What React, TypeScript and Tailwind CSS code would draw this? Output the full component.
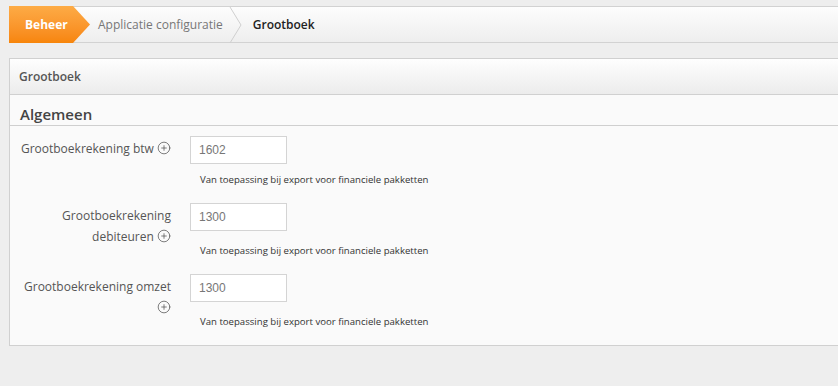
import { CirclePlus } from 'lucide-react'

const fields = [
  { id: 'btw', label: ['Grootboekrekening btw'], value: '1602', tall: false },
  { id: 'deb', label: ['Grootboekrekening', 'debiteuren'], value: '1300', tall: true },
  { id: 'omzet', label: ['Grootboekrekening omzet', ''], value: '1300', tall: true },
]

function Chevron() {
  return (
    <svg width="14" height="36" viewBox="0 0 14 36" className="shrink-0">
      <polyline points="1,0 12,18 1,36" fill="none" stroke="#cfcfcf" strokeWidth="1" />
    </svg>
  )
}

function Plus() {
  return <CirclePlus size={14} strokeWidth={1.3} className="inline-block text-[#555] align-[-2px]" />
}

export default function App() {
  return (
    <div
      className="min-h-[386px] w-[838px] overflow-hidden bg-[#eeeeee] pl-[9px] pt-[6px]"
      style={{ fontFamily: '"Open Sans", "Noto Sans", sans-serif' }}
    >
      {/* Breadcrumb */}
      <div className="flex h-[37px] items-stretch border border-r-0 border-[#d2d2d2] bg-gradient-to-b from-[#fdfdfd] to-[#eeeeee]">
        <div
          className="-ml-px -mt-px -mb-px flex w-[81px] items-center bg-gradient-to-b from-[#fdab45] to-[#f7850a] pl-[16px] text-[12px] font-bold text-white"
          style={{ clipPath: 'polygon(0 0, 64px 0, 81px 50%, 64px 100%, 0 100%)' }}
        >
          Beheer
        </div>
        <div className="flex items-center pl-[8px] pr-[6px] text-[12px] text-[#777]">Applicatie configuratie</div>
        <Chevron />
        <div className="flex items-center pl-[10px] text-[12px] font-semibold text-[#222]">Grootboek</div>
      </div>

      {/* Panel */}
      <div className="mt-[15px] border border-r-0 border-[#d0d0d0] bg-[#fafafa]">
        <div className="flex h-[36px] items-center border-b border-[#d0d0d0] bg-gradient-to-b from-[#fefefe] to-[#ececec] pl-[9px] text-[12px] font-semibold text-[#555]">
          Grootboek
        </div>
        <div className="border-b border-[#cfcfcf] pl-[10px] pt-[9px] pb-[1px] text-[15px] font-semibold leading-[20px] text-[#444]">
          Algemeen
        </div>

        <div className="pt-[10px]">
          {fields.map((f) => (
            <div key={f.id} className="mb-[16px] flex">
              <div className="w-[161px] shrink-0 pt-[2px] text-right text-[12px] leading-[21px] text-[#555]">
                {f.label.length === 1 ? (
                  <span>
                    {f.label[0]} <Plus />
                  </span>
                ) : (
                  <>
                    <div>{f.label[0]}</div>
                    <div>
                      {f.label[1]} <Plus />
                    </div>
                  </>
                )}
              </div>
              <div className="ml-[19px] flex flex-col">
                <input
                  defaultValue={f.value}
                  className="h-[28px] w-[97px] border border-[#d4d4d4] bg-white px-[8px] text-[12px] text-[#777] outline-none"
                  style={{ fontFamily: '"Liberation Sans", Arial, sans-serif' }}
                />
                <div className={`${f.tall ? 'mt-[13px]' : 'mt-[9px]'} pl-[10px] text-[9.6px] leading-[14px] text-[#333]`}>
                  Van toepassing bij export voor financiele pakketten
                </div>
              </div>
            </div>
          ))}
        </div>
      </div>
    </div>
  )
}
